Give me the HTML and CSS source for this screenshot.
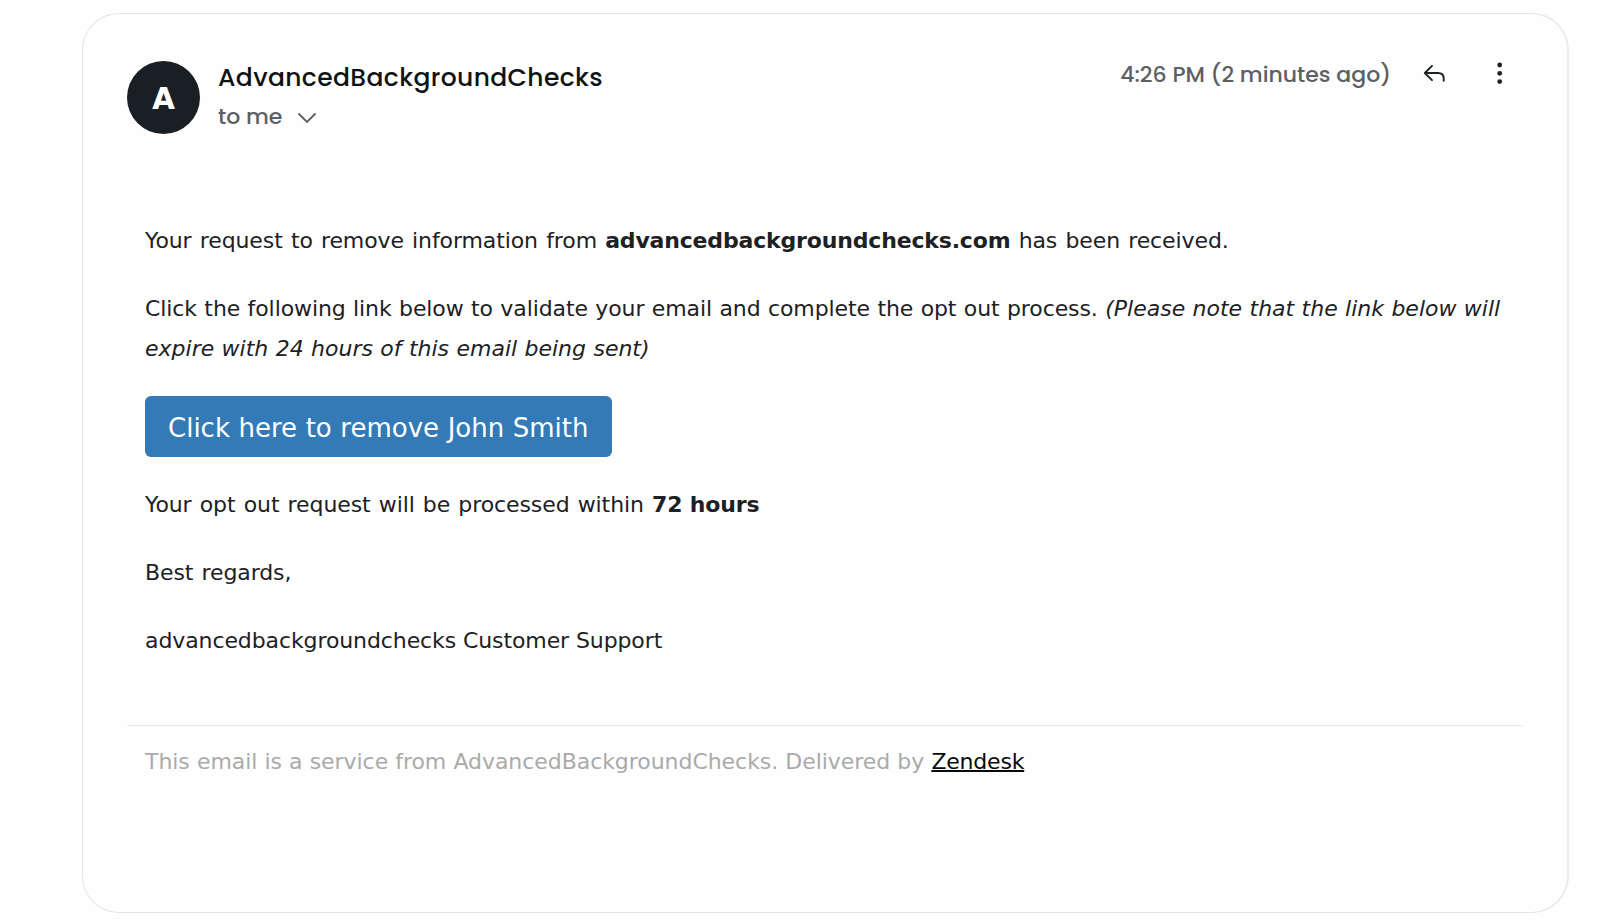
FILE: index.html
```
<!DOCTYPE html>
<html lang="en">
<head>
    <meta charset="utf-8">
    <title>AdvancedBackgroundChecks</title>
    <link rel="stylesheet" href="styles.css">
</head>
<body>
    <div class="email">
        <div class="email-header">
            <div class="avatar">A</div>
            <div class="sender">
                <div class="sender-name">AdvancedBackgroundChecks</div>
                <div class="recipient">
                    <span>to me</span>
                    <svg class="chevron" width="20" height="12" viewBox="0 0 20 12">
                        <path d="M1.5 1.5 L10 10 L18.5 1.5"/>
                    </svg>
                </div>
            </div>
            <div class="actions">
                <span class="time">4:26 PM (2 minutes ago)</span>
                <svg class="reply" width="24" height="20" viewBox="0 0 24 20">
                    <path d="M10 1.8 L2.8 9 L10 16.2 M2.8 9 H16 Q21.7 9 21.7 14.5 V16.8"/>
                </svg>
                <svg class="more" width="6" height="24" viewBox="0 0 6 24">
                    <circle cx="2.7" cy="3" r="2.4"/>
                    <circle cx="2.7" cy="11.3" r="2.4"/>
                    <circle cx="2.7" cy="19.6" r="2.4"/>
                </svg>
            </div>
        </div>

        <div class="email-body">
            <p>Your request to remove information from <b>advancedbackgroundchecks.com</b> has been received.</p>
            <p class="instructions">Click the following link below to validate your email and complete the opt out process. <i>(Please note that the link below will<br>expire with 24 hours of this email being sent)</i></p>
            <a class="remove-button" href="#">Click here to remove John Smith</a>
            <p>Your opt out request will be processed within <b>72 hours</b></p>
            <p>Best regards,</p>
            <p class="signature">advancedbackgroundchecks Customer Support</p>
        </div>

        <div class="email-footer">
            This email is a service from AdvancedBackgroundChecks. Delivered by <a href="#">Zendesk</a>
        </div>
    </div>
</body>
</html>
```
FILE: styles.css
```
* {
    box-sizing: border-box;
}

body {
    margin: 0;
    padding: 13px 31px 10px 82px;
    background-color: #fefefe;
    font-family: Verdana, "DejaVu Sans", sans-serif;
}

.email {
    height: 900px;
    padding: 47px 44px 0 44px;
    border: 1px solid #e4e4e4;
    border-right: 2px solid #ebebeb;
    border-radius: 37px;
    background-color: #fefefe;
}

.email-header {
    display: flex;
    height: 153px;
    font-family: Poppins, Inter, sans-serif;
    font-weight: 500;
}

.avatar {
    width: 73px;
    height: 73px;
    border-radius: 50%;
    background-color: #1a1f23;
    color: #fff;
    font-size: 32px;
    font-weight: 700;
    line-height: 74px;
    text-align: center;
}

.sender {
    margin-left: 18px;
}

.sender-name {
    margin-top: -3px;
    color: #101314;
    font-size: 25px;
    line-height: 39px;
    letter-spacing: 0.38px;
}

.recipient {
    display: flex;
    align-items: center;
    gap: 15px;
    color: #5c5f63;
    font-size: 22px;
    line-height: 40px;
}

.chevron {
    margin-top: 1px;
    fill: none;
    stroke: #5c5f63;
    stroke-width: 1.8;
}

.actions {
    display: flex;
    align-items: center;
    height: 26px;
    margin-left: auto;
    padding-right: 20px;
}

.time {
    color: #5c5f63;
    font-size: 22px;
}

.reply {
    margin-left: 31px;
    fill: none;
    stroke: #1d2226;
    stroke-width: 1.9;
    stroke-linecap: round;
    stroke-linejoin: round;
}

.more {
    margin-left: 51px;
    fill: #1d2226;
}

.email-body {
    height: 511px;
    margin-right: -20px;
    padding: 7px 0 0 18px;
    color: #1d2124;
    font-size: 22px;
    line-height: 40.5px;
    letter-spacing: -0.1px;
    word-spacing: 1.3px;
    white-space: nowrap;
}

.email-body p {
    margin: 0 0 27.3px;
}

.email-body b {
    letter-spacing: -0.17px;
    word-spacing: 0;
}

.email-body .instructions {
    margin-bottom: 26.3px;
    word-spacing: 0.55px;
}

.email-body i {
    letter-spacing: 0;
    word-spacing: 0.4px;
}

.email-body .signature {
    word-spacing: 0;
}

.remove-button {
    display: block;
    width: 467px;
    height: 61px;
    margin-bottom: 28px;
    padding: 1px 0 0 23px;
    border-radius: 6px;
    background-color: #337ab7;
    color: #fff;
    font-size: 26px;
    line-height: 62px;
    letter-spacing: 0;
    word-spacing: 0.3px;
    text-decoration: none;
}

.email-footer {
    padding: 16px 0 0 18px;
    border-top: 1px solid #e9e9e9;
    color: #aaa;
    font-size: 22px;
    line-height: 40px;
    letter-spacing: -0.05px;
    word-spacing: 0.2px;
    white-space: nowrap;
}

.email-footer a {
    color: #080a0a;
    letter-spacing: -0.2px;
    text-decoration-thickness: 2px;
}
```
